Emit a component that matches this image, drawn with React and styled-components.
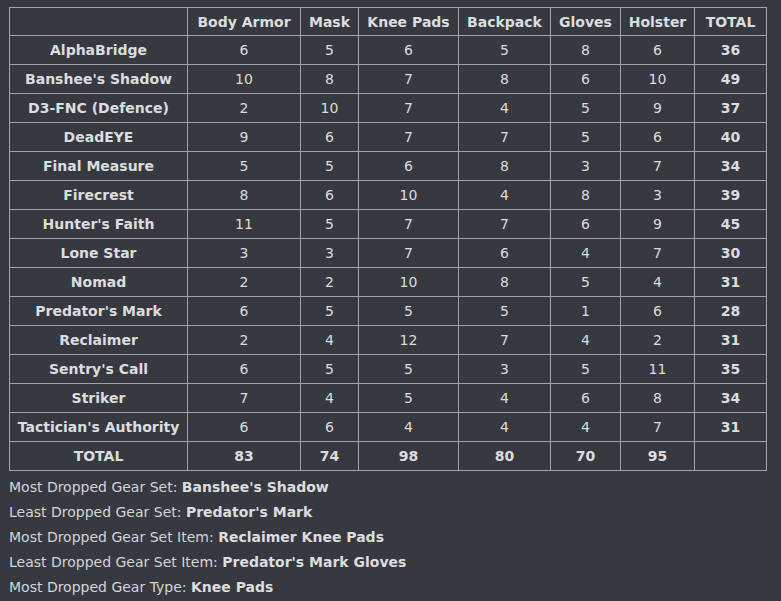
import React from "react";
import styled, { createGlobalStyle } from "styled-components";

const GlobalStyle = createGlobalStyle`
  html, body {
    margin: 0;
    background: #36393f;
  }
  body {
    font-family: "DejaVu Sans", Verdana, sans-serif;
    font-size: 14px;
    color: #dcddde;
  }
`;

const Page = styled.div`
  padding: 7px 9px;
`;

const Table = styled.table`
  border-collapse: collapse;
  table-layout: fixed;
  width: 757px;
`;

const HeadCell = styled.th`
  border: 1px solid #a3a3a6;
  height: 27px;
  padding: 0;
  font-weight: bold;
  text-align: center;
`;

const NameCell = styled.th`
  border: 1px solid #a3a3a6;
  height: 28px;
  padding: 0;
  font-weight: bold;
  text-align: center;
`;

const Cell = styled.td`
  border: 1px solid #a3a3a6;
  height: 28px;
  padding: 0;
  text-align: center;
  font-weight: ${(p) => (p.$bold ? "bold" : "normal")};
`;

const Summary = styled.div`
  margin-top: 4px;
`;

const Line = styled.div`
  line-height: 25px;
  color: #d4d5d7;
  b {
    color: #dcddde;
  }
`;

const columns = ["Body Armor", "Mask", "Knee Pads", "Backpack", "Gloves", "Holster", "TOTAL"];
const widths = [178, 113, 58, 100, 92, 70, 74, 72];

const rows = [
  ["AlphaBridge", 6, 5, 6, 5, 8, 6, 36],
  ["Banshee's Shadow", 10, 8, 7, 8, 6, 10, 49],
  ["D3-FNC (Defence)", 2, 10, 7, 4, 5, 9, 37],
  ["DeadEYE", 9, 6, 7, 7, 5, 6, 40],
  ["Final Measure", 5, 5, 6, 8, 3, 7, 34],
  ["Firecrest", 8, 6, 10, 4, 8, 3, 39],
  ["Hunter's Faith", 11, 5, 7, 7, 6, 9, 45],
  ["Lone Star", 3, 3, 7, 6, 4, 7, 30],
  ["Nomad", 2, 2, 10, 8, 5, 4, 31],
  ["Predator's Mark", 6, 5, 5, 5, 1, 6, 28],
  ["Reclaimer", 2, 4, 12, 7, 4, 2, 31],
  ["Sentry's Call", 6, 5, 5, 3, 5, 11, 35],
  ["Striker", 7, 4, 5, 4, 6, 8, 34],
  ["Tactician's Authority", 6, 6, 4, 4, 4, 7, 31],
];

const totals = [83, 74, 98, 80, 70, 95, ""];

const summary = [
  ["Most Dropped Gear Set", "Banshee's Shadow"],
  ["Least Dropped Gear Set", "Predator's Mark"],
  ["Most Dropped Gear Set Item", "Reclaimer Knee Pads"],
  ["Least Dropped Gear Set Item", "Predator's Mark Gloves"],
  ["Most Dropped Gear Type", "Knee Pads"],
];

export default function App() {
  return (
    <Page>
      <GlobalStyle />
      <Table>
        <colgroup>
          {widths.map((w, i) => (
            <col key={i} style={{ width: w }} />
          ))}
        </colgroup>
        <thead>
          <tr>
            <HeadCell />
            {columns.map((c) => (
              <HeadCell key={c}>{c}</HeadCell>
            ))}
          </tr>
        </thead>
        <tbody>
          {rows.map(([name, ...vals]) => (
            <tr key={name}>
              <NameCell>{name}</NameCell>
              {vals.map((v, i) => (
                <Cell key={i} $bold={i === vals.length - 1}>
                  {v}
                </Cell>
              ))}
            </tr>
          ))}
          <tr>
            <NameCell>TOTAL</NameCell>
            {totals.map((v, i) => (
              <Cell key={i} $bold>
                {v}
              </Cell>
            ))}
          </tr>
        </tbody>
      </Table>
      <Summary>
        {summary.map(([label, value]) => (
          <Line key={label}>
            {label}: <b>{value}</b>
          </Line>
        ))}
      </Summary>
    </Page>
  );
}
